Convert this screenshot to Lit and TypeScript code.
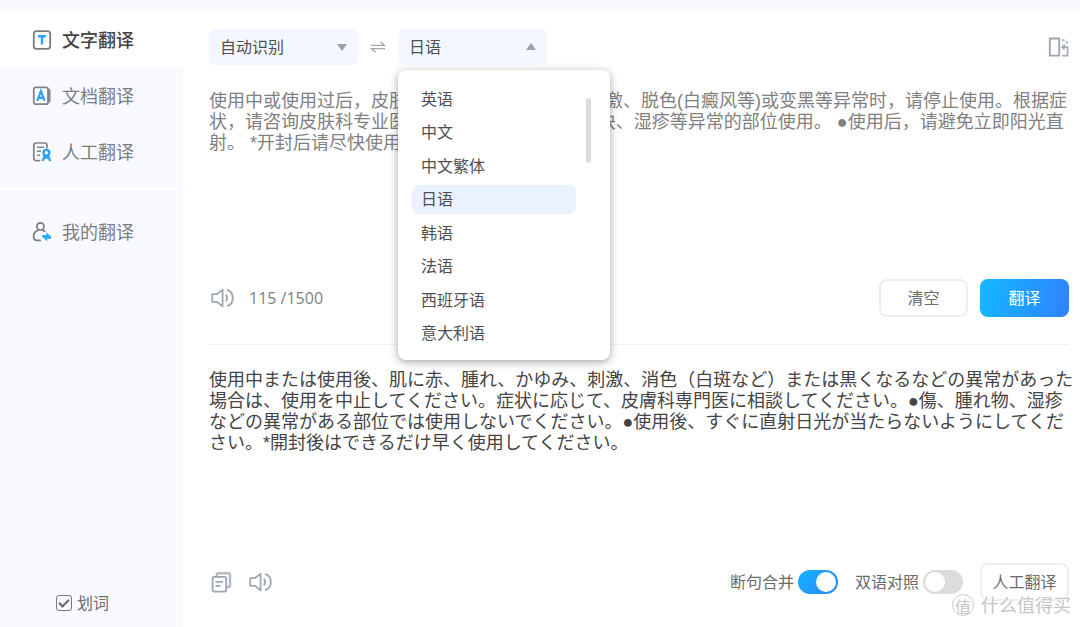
import { LitElement, html, css, svg } from "lit";
import { customElement, property, state } from "lit/decorators.js";
import { classMap } from "lit/directives/class-map.js";

const LANGUAGES = ["英语", "中文", "中文繁体", "日语", "韩语", "法语", "西班牙语", "意大利语"];

const SOURCE_TEXT = `使用中或使用过后，皮肤出现红、肿胀、发痒、刺激、脱色(白癜风等)或变黑等异常时，请停止使用。根据症
状，请咨询皮肤科专业医生。●请勿用于伤口、肿块、湿疹等异常的部位使用。 ●使用后，请避免立即阳光直
射。 *开封后请尽快使用。`;

const RESULT_TEXT = `使用中または使用後、肌に赤、腫れ、かゆみ、刺激、消色（白斑など）または黒くなるなどの異常があった
場合は、使用を中止してください。症状に応じて、皮膚科専門医に相談してください。●傷、腫れ物、湿疹
などの異常がある部位では使用しないでください。●使用後、すぐに直射日光が当たらないようにしてくだ
さい。*開封後はできるだけ早く使用してください。`;

const glyphs = {
  text: svg`<rect x="1.800" y="1.200" width="16.400" height="17.600" rx="2.600" fill="#fff" stroke="#7a7c80" stroke-width="1.800"/>
    <path d="M6 6.300h8M10 6.300v8.200" fill="none" stroke="#2aa2ff" stroke-width="2.400"/>`,
  doc: svg`<path d="M15 2.400h1.200a2.400 2.400 0 0 1 2.400 2.400v10a2.400 2.400 0 0 1-2.400 2.400H15z" fill="#8a8d93"/>
    <rect x="1.800" y="1.400" width="14.200" height="16.800" rx="2" fill="#fff" stroke="#808389" stroke-width="1.800"/>
    <path d="M5.200 14.800 8.900 5l3.700 9.800M6.600 11.800h4.600" fill="none" stroke="#2aa2ff" stroke-width="2.200"/>`,
  human: svg`<path d="M8.400 18.600H4a2.200 2.200 0 0 1-2.200-2.200V3.200A2.200 2.200 0 0 1 4 1h8.800A2.200 2.200 0 0 1 15 3.200v3.200" fill="none" stroke="#808389" stroke-width="1.700"/>
    <path d="M5 5.200h7M5 9.200h4M5 13.200h3" fill="none" stroke="#808389" stroke-width="1.600"/>
    <circle cx="14.400" cy="10.800" r="2.900" fill="none" stroke="#2aa2ff" stroke-width="2.300"/>
    <path d="M13 13.400 10.600 19M15.800 13.400l2.400 5.600M12 16.200l2.400-1.200 2.400 1.200" fill="none" stroke="#2aa2ff" stroke-width="2.200"/>`,
  mine: svg`<circle cx="8.400" cy="4.400" r="3.600" fill="none" stroke="#77797e" stroke-width="1.700"/>
    <path d="M6.200 8.200C3 9.200 1.600 11.600 1.600 14.400c0 2.800 1.500 4 3.800 4h2.800M10.600 8.200l2.200 1" fill="none" stroke="#77797e" stroke-width="1.700" stroke-linecap="round"/>
    <path d="M10.200 13h4.200V10.200l4.800 4.600v2h-4v2.400l-5-4.400z" fill="#2aacff"/>`,
  swap: svg`<path d="M1 5.400h13.400L10.400 1.800M15 8.600H1.600l4 3.600" fill="none" stroke="#a3a8b1" stroke-width="1.400"/>`,
  layout: svg`<path d="M2.800 1.500h9.400v17.200H2.800z" fill="none" stroke="#9ba3b1" stroke-width="1.800"/>
    <path d="M15.200 3.200h2.400M18.800 4.400l2 2M20.600 9.400v9.200h-5.400M20.600 10.200h-5.200l2.600-2.800M15.400 10.200l2.200 2.400" fill="none" stroke="#a5acb8" stroke-width="1.700"/>`,
  speaker: svg`<path d="M1.200 6.200h4.600L11.600 1.600v16.800L5.800 13.800H1.200z" fill="none" stroke="#a1a8b4" stroke-width="1.800" stroke-linejoin="round"/>
    <path d="M14.800 6.600q2.600 3.400 0 6.800M16 1.800q5.800 1.800 5.800 8.200T16 18.200" fill="none" stroke="#a1a8b4" stroke-width="1.900"/>`,
  copy: svg`<path d="M5.800 4V2.600a1.400 1.400 0 0 1 1.400-1.400H17.600a1.400 1.400 0 0 1 1.400 1.400v10.800a1.400 1.400 0 0 1-1.400 1.400h-1.600" fill="none" stroke="#b4bac4" stroke-width="2.400"/>
    <rect x="1.600" y="4.800" width="13.600" height="14.800" rx="1.800" fill="#fff" stroke="#9ba3b1" stroke-width="1.800"/>
    <path d="M4.600 9.800h7.400M4.600 13.800h5" fill="none" stroke="#9ba3b1" stroke-width="1.700"/>`,
};

@customElement("nav-item")
class NavItem extends LitElement {
  @property() label = "";
  @property() glyph: keyof typeof glyphs = "text";
  @property({ type: Boolean }) active = false;

  static styles = css`
    :host {
      display: block;
    }
    .link {
      display: flex;
      align-items: center;
      gap: 10px;
      height: 56px;
      padding: 1px 32px 0;
      box-sizing: border-box;
      color: #7c7e83;
      font-size: 18px;
      text-decoration: none;
      white-space: nowrap;
    }
    .active {
      background: #fff;
      color: #444;
      font-weight: 500;
    }
    .glyph {
      flex: none;
      width: 20px;
      height: 20px;
    }
  `;

  render() {
    return html`<a class=${classMap({ link: true, active: this.active })} href="#">
      <svg class="glyph" viewBox="0 0 20 20" aria-hidden="true">${glyphs[this.glyph]}</svg>
      <span>${this.label}</span>
    </a>`;
  }
}

@customElement("toggle-switch")
class ToggleSwitch extends LitElement {
  @property() label = "";
  @property({ type: Boolean }) on = false;

  static styles = css`
    .label {
      display: flex;
      align-items: center;
      gap: 4px;
      white-space: nowrap;
    }
    .track {
      appearance: none;
      width: 40px;
      height: 24px;
      margin: 0;
      padding: 2px;
      border-radius: 12px;
      background: #dcdcdc;
      display: flex;
    }
    .track::before {
      content: "";
      width: 20px;
      height: 20px;
      border-radius: 50%;
      background: #fff;
    }
    .track:checked {
      justify-content: flex-end;
      background: linear-gradient(135deg, #14b4ff, #2c86ff);
    }
  `;

  render() {
    return html`<label class="label">
      ${this.label}<input class="track" type="checkbox" role="switch" .checked=${this.on} />
    </label>`;
  }
}

@customElement("app-root")
class AppRoot extends LitElement {
  @state() private target = "日语";

  static styles = css`
    :host {
      display: grid;
      grid-template-columns: 183px minmax(0, 1fr);
      min-height: 100vh;
      box-sizing: border-box;
      border-top: 11px solid #f9faff;
      background: #fff;
      color: #6c6c6c;
      font-family: "Open Sans", "Noto Sans CJK SC", sans-serif;
      font-size: 16px;
      line-height: 24px;
    }
    .side {
      display: flex;
      flex-direction: column;
      background: #f9faff;
    }
    .rule {
      height: 2px;
      margin: 9px 5px 13px 0;
      border: 0;
      background: #fff;
    }
    .pick {
      display: flex;
      align-items: center;
      gap: 5px;
      margin: auto 0 12px 56px;
    }
    .tick {
      appearance: none;
      width: 16px;
      height: 16px;
      margin: 0;
      box-sizing: border-box;
      border: 1px solid #777;
      border-radius: 3px;
      display: grid;
      place-items: center;
    }
    .tick:checked::before {
      content: "";
      width: 8px;
      height: 4px;
      border: solid #666;
      border-width: 0 0 2px 2px;
      transform: translateY(-1px) rotate(-45deg);
    }
    .main {
      display: flex;
      flex-direction: column;
      padding-left: 26px;
    }
    .bar {
      display: flex;
      align-items: center;
      margin-right: 11px;
    }
    .top {
      margin-top: 18px;
      gap: 12px;
    }
    .picker {
      position: relative;
      display: flex;
      align-items: center;
      width: 149px;
      height: 36px;
    }
    .select {
      appearance: none;
      width: 100%;
      height: 100%;
      padding: 0 11px;
      border: 0;
      border-radius: 7px;
      background: #f4f7ff;
      color: #505050;
      font: inherit;
    }
    .caret {
      position: absolute;
      right: 11px;
      width: 10px;
      height: 8px;
      fill: #9ba1ad;
      pointer-events: none;
    }
    .menu {
      position: absolute;
      z-index: 2;
      top: 41px;
      left: 0;
      display: flex;
      justify-content: space-between;
      width: 212px;
      min-height: 290px;
      box-sizing: border-box;
      padding: 14px 19px 12px 14px;
      border-radius: 8px;
      background: #fff;
      box-shadow: 0 2px 9px rgba(0, 0, 0, 0.36);
    }
    .list {
      display: grid;
      align-content: space-between;
      width: 164px;
      margin: 0;
      padding: 0;
      list-style: none;
    }
    .option {
      display: block;
      width: 100%;
      height: 29px;
      padding: 0 9px;
      border: 0;
      border-radius: 7px;
      background: none;
      color: #505050;
      font: inherit;
      text-align: left;
    }
    .chosen {
      background: #ebf2ff;
    }
    .thumb {
      width: 5px;
      height: 65px;
      margin-top: 14px;
      border-radius: 3px;
      background: #dcdcdc;
    }
    .icon {
      display: flex;
      padding: 0;
      border: 0;
      background: none;
    }
    .end {
      margin-left: auto;
    }
    .passage {
      display: block;
      margin: 0;
      padding: 0;
      border: 0;
      outline: 0;
      resize: none;
      overflow: hidden;
      white-space: pre;
      font-size: 18px;
      line-height: 21px;
    }
    .source {
      height: 168px;
      margin-top: 26px;
      background: none;
      color: #808080;
      font-family: "Liberation Sans", "Noto Sans CJK SC", sans-serif;
    }
    .result {
      flex: 1;
      margin-top: 25px;
      color: #444;
      font-family: "Liberation Sans", "Noto Sans CJK JP", sans-serif;
    }
    .actions {
      gap: 12px;
      margin-top: 20px;
      padding: 0 0 27px 2px;
      border-bottom: 1px solid #efefef;
    }
    .tools {
      gap: 17px;
      padding: 20px 0 26px 2px;
    }
    .count {
      color: #808080;
    }
    .button {
      width: 89px;
      height: 38px;
      padding: 0;
      border: 2px solid #eee;
      border-radius: 8px;
      background: #fff;
      color: #6c6c6c;
      font: inherit;
    }
    .primary {
      border: 0;
      background: linear-gradient(100deg, #14b8ff, #3082ff);
      color: #fff;
    }
    .mark {
      position: absolute;
      right: 9px;
      bottom: 10px;
      display: flex;
      align-items: center;
      gap: 7px;
      color: #c6c6c6;
      font-size: 18px;
      text-shadow: 0 0 1px #fff, -1px -1px 0 #fff;
    }
    .seal {
      display: grid;
      place-items: center;
      width: 20px;
      height: 20px;
      border: 1px solid #ccc;
      border-radius: 50%;
      background: #fff;
      font-size: 16px;
    }
  `;

  private icon(name: keyof typeof glyphs, label: string, width: number, height: number) {
    return html`<button class="icon" aria-label=${label}>
      <svg width=${width} height=${height} viewBox="0 0 ${width} ${height}">${glyphs[name]}</svg>
    </button>`;
  }

  render() {
    return html`
      <nav class="side">
        <nav-item label="文字翻译" glyph="text" active></nav-item>
        <nav-item label="文档翻译" glyph="doc"></nav-item>
        <nav-item label="人工翻译" glyph="human"></nav-item>
        <hr class="rule" />
        <nav-item label="我的翻译" glyph="mine"></nav-item>
        <label class="pick"><input class="tick" type="checkbox" checked />划词</label>
      </nav>
      <main class="main">
        <div class="bar top">
          <div class="picker">
            <select class="select" aria-label="源语言">
              <option>自动识别</option>
            </select>
            <svg class="caret" viewBox="0 0 10 8"><path d="M0 1h10L5 8z" /></svg>
          </div>
          ${this.icon("swap", "交换语言", 16, 14)}
          <div class="picker">
            <select class="select" aria-label="目标语言">
              ${LANGUAGES.map((name) => html`<option .selected=${name === this.target}>${name}</option>`)}
            </select>
            <svg class="caret" viewBox="0 0 10 8"><path d="M0 7h10L5 0z" /></svg>
            <div class="menu">
              <ul class="list">
                ${LANGUAGES.map(
                  (name) => html`<li>
                    <button
                      class=${classMap({ option: true, chosen: name === this.target })}
                      @click=${() => (this.target = name)}
                    >${name}</button>
                  </li>`
                )}
              </ul>
              <div class="thumb"></div>
            </div>
          </div>
          <div class="end">${this.icon("layout", "切换布局", 22, 20)}</div>
        </div>
        <textarea class="passage source" aria-label="原文" wrap="off" spellcheck="false" .value=${SOURCE_TEXT}></textarea>
        <div class="bar actions">
          ${this.icon("speaker", "朗读原文", 26, 20)}
          <span class="count">115 /1500</span>
          <button class="button end">清空</button>
          <button class="button primary">翻译</button>
        </div>
        <p class="passage result" lang="ja">${RESULT_TEXT}</p>
        <div class="bar tools">
          ${this.icon("copy", "复制", 21, 21)}
          ${this.icon("speaker", "朗读译文", 26, 20)}
          <toggle-switch class="end" label="断句合并" on></toggle-switch>
          <toggle-switch label="双语对照"></toggle-switch>
          <button class="button">人工翻译</button>
        </div>
      </main>
      <div class="mark"><span class="seal">值</span>什么值得买</div>
    `;
  }
}
